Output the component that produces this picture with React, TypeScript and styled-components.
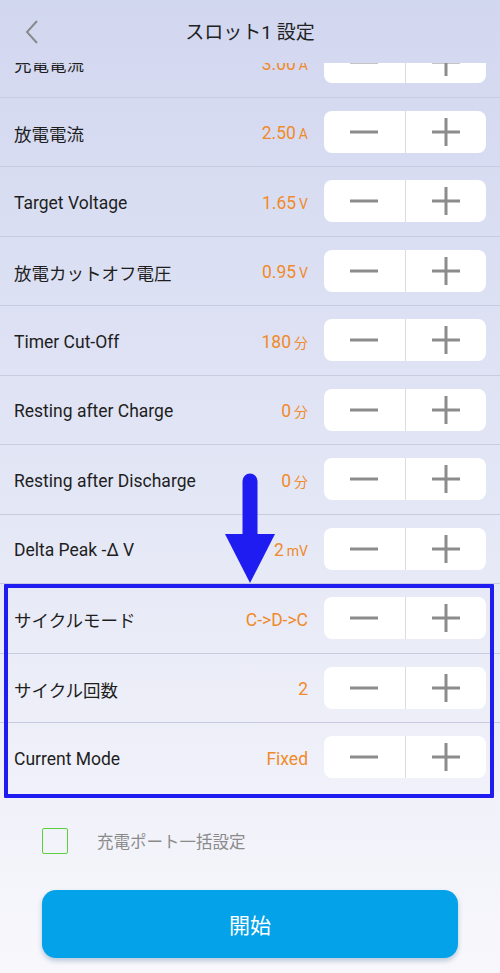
import React, { useLayoutEffect, useRef } from 'react';
import styled, { createGlobalStyle } from 'styled-components';

const GlobalStyle = createGlobalStyle`
  html, body {
    margin: 0;
    padding: 0;
  }
  body {
    font-family: Roboto, "Noto Sans CJK JP", "Noto Sans", sans-serif;
  }
`;

const Page = styled.div`
  width: 500px;
  height: 973px;
  display: flex;
  flex-direction: column;
  background: linear-gradient(180deg, #d2d7f0 0%, #e3e6f5 50%, #f8f8fc 100%);
  overflow: hidden;
`;

const Header = styled.header`
  height: 63px;
  flex: none;
  display: grid;
  grid-template-columns: 64px 1fr 64px;
  align-items: center;
`;

const BackButton = styled.button`
  border: none;
  background: none;
  padding: 0 0 0 24px;
  height: 100%;
  display: flex;
  align-items: center;
  cursor: pointer;
`;

const Title = styled.h1`
  margin: 0;
  text-align: center;
  font-size: 19px;
  font-weight: 400;
  color: #222;
  padding-bottom: 2px;
`;

const Scroller = styled.div`
  flex: 1;
  overflow: hidden;
`;

const Row = styled.div<{ $last?: boolean }>`
  height: 68.5px;
  display: flex;
  align-items: center;
  padding: 0 14px;
  border-bottom: 1px solid ${({ $last }) => ($last ? 'transparent' : '#c8cce0')};
`;

const Label = styled.span`
  flex: 1;
  padding-top: 3px;
  font-size: 17.5px;
  color: #1e1e1e;
`;

const Value = styled.span`
  margin-right: 16px;
  padding-top: 3px;
  font-size: 17.5px;
  color: #f08a2a;
  white-space: nowrap;
`;

const Unit = styled.span`
  font-size: 14px;
  margin-left: 3px;
`;

const Stepper = styled.div`
  width: 162px;
  height: 42px;
  display: flex;
  background: #fff;
  border-radius: 8px;
  overflow: hidden;
`;

const StepButton = styled.button`
  flex: 1;
  border: none;
  background: transparent;
  display: flex;
  align-items: center;
  justify-content: center;
  padding: 0;
  & + & {
    border-left: 1px solid #dcdcdc;
  }
`;

const Group = styled.div`
  position: relative;
`;

const Highlight = styled.div`
  position: absolute;
  top: 0;
  bottom: -5px;
  left: 4px;
  right: 6px;
  border: 4px solid #1f1cf2;
  border-radius: 1px;
  pointer-events: none;
`;

const Arrow = styled.svg`
  position: absolute;
  left: 225px;
  top: -111px;
`;

const CheckRow = styled.label`
  display: flex;
  align-items: center;
  margin: 35px 0 0 42px;
  gap: 29px;
`;

const CheckBox = styled.span`
  width: 24px;
  height: 24px;
  border: 1.5px solid #5ccf3c;
  border-radius: 2px;
  background: transparent;
`;

const CheckLabel = styled.span`
  font-size: 16.5px;
  color: #8a8a8a;
`;

const StartButton = styled.button`
  display: block;
  width: 416px;
  height: 68px;
  margin: 36px 0 30px 42px;
  border: none;
  border-radius: 14px;
  background: #04a2e8;
  color: #fff;
  font-family: inherit;
  font-size: 21px;
  box-shadow: 0 3px 5px rgba(0, 60, 120, 0.25);
`;

const Minus = () => (
  <svg width="28" height="28" viewBox="0 0 28 28">
    <line x1="0" y1="14" x2="28" y2="14" stroke="#8c8c8c" strokeWidth="3" />
  </svg>
);

const Plus = () => (
  <svg width="28" height="28" viewBox="0 0 28 28">
    <line x1="0" y1="14" x2="28" y2="14" stroke="#8c8c8c" strokeWidth="3" />
    <line x1="14" y1="0" x2="14" y2="28" stroke="#8c8c8c" strokeWidth="3" />
  </svg>
);

interface Setting {
  label: string;
  value: string;
  unit?: string;
}

const settings: Setting[] = [
  { label: '充電電流', value: '3.00', unit: 'A' },
  { label: '放電電流', value: '2.50', unit: 'A' },
  { label: 'Target Voltage', value: '1.65', unit: 'V' },
  { label: '放電カットオフ電圧', value: '0.95', unit: 'V' },
  { label: 'Timer Cut-Off', value: '180', unit: '分' },
  { label: 'Resting after Charge', value: '0', unit: '分' },
  { label: 'Resting after Discharge', value: '0', unit: '分' },
  { label: 'Delta Peak -Δ V', value: '2', unit: 'mV' },
];

const cycleSettings: Setting[] = [
  { label: 'サイクルモード', value: 'C->D->C' },
  { label: 'サイクル回数', value: '2' },
  { label: 'Current Mode', value: 'Fixed' },
];

const SettingRow: React.FC<{ item: Setting; last?: boolean }> = ({ item, last }) => (
  <Row $last={last}>
    <Label>{item.label}</Label>
    <Value>
      {item.value}
      {item.unit && <Unit>{item.unit}</Unit>}
    </Value>
    <Stepper>
      <StepButton aria-label="decrease">
        <Minus />
      </StepButton>
      <StepButton aria-label="increase">
        <Plus />
      </StepButton>
    </Stepper>
  </Row>
);

const App: React.FC = () => {
  const scrollRef = useRef<HTMLDivElement>(null);

  useLayoutEffect(() => {
    if (scrollRef.current) scrollRef.current.scrollTop = 35;
  }, []);

  return (
    <Page>
      <GlobalStyle />
      <Header>
        <BackButton aria-label="back">
          <svg width="16" height="26" viewBox="0 0 16 26">
            <polyline points="13,2 3,13 13,24" fill="none" stroke="#8a8a8a" strokeWidth="2" />
          </svg>
        </BackButton>
        <Title>スロット1 設定</Title>
        <span />
      </Header>
      <Scroller ref={scrollRef}>
        {settings.map((item) => (
          <SettingRow key={item.label} item={item} />
        ))}
        <Group>
          {cycleSettings.map((item, i) => (
            <SettingRow key={item.label} item={item} last={i === cycleSettings.length - 1} />
          ))}
          <Highlight />
          <Arrow width="50" height="111" viewBox="0 0 50 111">
            <line x1="25" y1="8" x2="25" y2="70" stroke="#1f1cf2" strokeWidth="15" strokeLinecap="round" />
            <polygon points="0,61 50,61 25,110" fill="#1f1cf2" />
          </Arrow>
        </Group>
        <CheckRow>
          <CheckBox />
          <CheckLabel>充電ポート一括設定</CheckLabel>
        </CheckRow>
        <StartButton>開始</StartButton>
      </Scroller>
    </Page>
  );
};

export default App;
